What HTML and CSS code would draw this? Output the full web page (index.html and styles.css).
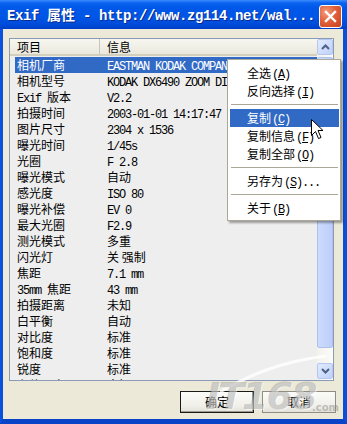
FILE: index.html
```html
<!DOCTYPE html>
<html lang="zh-CN">
<head>
<meta charset="utf-8">
<title>Exif 属性</title>
<link rel="stylesheet" href="styles.css">
</head>
<body>
<div class="window">
  <div class="titlebar">
    <div class="title"><span class="tm">Exif </span><span class="tc">属性</span><span class="tm"> - http://www.zg114.net/wal...</span></div>
    <div class="close">
      <svg width="13" height="13" viewBox="0 0 13 13"><path d="M2 2 L11 11 M11 2 L2 11" stroke="#fff" stroke-width="2.4" stroke-linecap="square"/></svg>
    </div>
  </div>
  <div class="frame">
    <div class="list">
      <div class="content">
        <div class="header">
          <div class="hcell h1">项目</div>
          <div class="hcell h2">信息</div>
        </div>
        <div class="rows">
          <div class="row sel"><div class="c1">相机厂商</div><div class="c2"><span class="m">EASTMAN KODAK COMPANY</span></div></div>
          <div class="row"><div class="c1">相机型号</div><div class="c2"><span class="m">KODAK DX6490 ZOOM DIGITAL CAMERA</span></div></div>
          <div class="row"><div class="c1"><span class="m">Exif </span>版本</div><div class="c2"><span class="m">V2.2</span></div></div>
          <div class="row"><div class="c1">拍摄时间</div><div class="c2"><span class="m">2003-01-01 14:17:47</span></div></div>
          <div class="row"><div class="c1">图片尺寸</div><div class="c2"><span class="m">2304 x 1536</span></div></div>
          <div class="row"><div class="c1">曝光时间</div><div class="c2"><span class="m">1/45s</span></div></div>
          <div class="row"><div class="c1">光圈</div><div class="c2"><span class="m">F 2.8</span></div></div>
          <div class="row"><div class="c1">曝光模式</div><div class="c2">自动</div></div>
          <div class="row"><div class="c1">感光度</div><div class="c2"><span class="m">ISO 80</span></div></div>
          <div class="row"><div class="c1">曝光补偿</div><div class="c2"><span class="m">EV 0</span></div></div>
          <div class="row"><div class="c1">最大光圈</div><div class="c2"><span class="m">F2.9</span></div></div>
          <div class="row"><div class="c1">测光模式</div><div class="c2">多重</div></div>
          <div class="row"><div class="c1">闪光灯</div><div class="c2">关 强制</div></div>
          <div class="row"><div class="c1">焦距</div><div class="c2"><span class="m">7.1 mm</span></div></div>
          <div class="row"><div class="c1"><span class="m">35mm </span>焦距</div><div class="c2"><span class="m">43 mm</span></div></div>
          <div class="row"><div class="c1">拍摄距离</div><div class="c2">未知</div></div>
          <div class="row"><div class="c1">白平衡</div><div class="c2">自动</div></div>
          <div class="row"><div class="c1">对比度</div><div class="c2">标准</div></div>
          <div class="row"><div class="c1">饱和度</div><div class="c2">标准</div></div>
          <div class="row"><div class="c1">锐度</div><div class="c2">标准</div></div>
          <div class="row"><div class="c1">主体距离</div><div class="c2">未知</div></div>
        </div>
      </div>
      <div class="scrollbar">
        <div class="sbtn">
          <svg width="9" height="6" viewBox="0 0 9 6"><path d="M1 5 L4.5 1.5 L8 5" fill="none" stroke="#4d6185" stroke-width="2"/></svg>
        </div>
        <div class="track"><div class="thumb"></div></div>
        <div class="sbtn">
          <svg width="9" height="6" viewBox="0 0 9 6"><path d="M1 1 L4.5 4.5 L8 1" fill="none" stroke="#4d6185" stroke-width="2"/></svg>
        </div>
      </div>
    </div>
    <div class="buttons">
      <div class="btn default">确定</div>
      <div class="btn">取消</div>
    </div>
  </div>

  <div class="menu">
    <div class="mi">全选<span class="m">(<u>A</u>)</span></div>
    <div class="mi">反向选择<span class="m">(<u>I</u>)</span></div>
    <div class="sep"></div>
    <div class="mi hl">复制<span class="m">(<u>C</u>)</span></div>
    <div class="mi">复制信息<span class="m">(<u>F</u>)</span></div>
    <div class="mi">复制全部<span class="m">(<u>O</u>)</span></div>
    <div class="sep"></div>
    <div class="mi">另存为<span class="m">(<u>S</u>)...</span></div>
    <div class="sep"></div>
    <div class="mi">关于<span class="m">(<u>B</u>)</span></div>
  </div>

  <svg class="cursor" width="13" height="21" viewBox="0 0 13 21">
    <path d="M0.5 0.5 L0.5 16.5 L4.5 12.5 L7.5 19.5 L10 18.5 L7 11.5 L12 11.5 Z" fill="#fff" stroke="#000" stroke-width="1"/>
  </svg>

  <div class="watermark">
    <svg class="swoosh" width="110" height="40" viewBox="0 0 110 40"><path d="M2 38 C30 22 60 8 108 2" fill="none" stroke="rgba(255,255,255,0.8)" stroke-width="3"/></svg>
    <span class="wm-big">IT168</span><span class="wm-com">.com</span>
  </div>
</div>
</body>
</html>
```

FILE: styles.css
```css
html, body {
  margin: 0;
  padding: 0;
}
body {
  width: 347px;
  height: 424px;
  overflow: hidden;
  background: #0054e3;
  font-family: "Noto Sans CJK SC", "Liberation Sans", sans-serif;
  font-size: 12px;
  color: #000;
}
.window {
  position: relative;
  width: 347px;
  height: 424px;
  display: flex;
  flex-direction: column;
}
.titlebar {
  height: 29px;
  flex: none;
  display: flex;
  align-items: center;
  justify-content: space-between;
  background: linear-gradient(#3d8cff 0px, #0a62f0 3px, #0058e8 8px, #0055e5 18px, #004ad8 25px, #003fc8 29px);
  padding: 0 5px 0 7px;
  box-sizing: border-box;
}
.title {
  color: #fff;
  font-weight: bold;
  white-space: nowrap;
  text-shadow: 1px 1px 0 #0b2a8a;
  line-height: 29px;
  padding-top: 1px;
}
.tm {
  font-family: "Liberation Mono", monospace;
  font-size: 14px;
  letter-spacing: -0.4px;
}
.tc {
  font-family: "Noto Sans CJK SC", sans-serif;
  font-size: 14px;
}
.close {
  width: 21px;
  height: 21px;
  border: 1px solid #fff;
  border-radius: 3px;
  background: radial-gradient(circle at 30% 30%, #f39c7e 0%, #e2603a 45%, #c8401a 100%);
  display: flex;
  align-items: center;
  justify-content: center;
  margin-top: 3px;
}
.frame {
  flex: 1;
  display: flex;
  flex-direction: column;
  background: #ece9d8;
  border-left: 3px solid #0a52de;
  border-right: 4px solid #0a4fd8;
  border-bottom: 5px solid #0843c8;
  padding: 9px 6px 0 6px;
}
.list {
  height: 343px;
  box-sizing: border-box;
  margin-right: 3px;
  border: 1px solid #8a9bb8;
  background: #eeeeee;
  display: flex;
  overflow: hidden;
}
.content {
  flex: 1;
  min-width: 0;
  overflow: hidden;
}
.header {
  height: 17px;
  box-sizing: border-box;
  display: flex;
  background: linear-gradient(#f7f6f0, #ebe9dd);
  border-bottom: 2px solid #d3cfbf;
}
.hcell {
  line-height: 15px;
  padding-left: 7px;
  box-sizing: border-box;
}
.h1 {
  width: 90px;
  border-right: 1px solid #c9c6b5;
}
.h2 {
  flex: 1;
}
.rows {
  padding: 1px 0 0 5px;
}
.row {
  display: flex;
  height: 16px;
  line-height: 16px;
  white-space: nowrap;
}
.row.sel {
  background: #316ac5;
  color: #fff;
}
.c1 {
  width: 85px;
  padding-left: 2px;
  box-sizing: border-box;
  flex: none;
}
.c2 {
  flex: 1;
  padding-left: 7px;
  overflow: hidden;
}
.m {
  font-family: "Liberation Mono", monospace;
  font-size: 12px;
  letter-spacing: -1.2px;
}
.scrollbar {
  width: 16px;
  flex: none;
  display: flex;
  flex-direction: column;
  background: linear-gradient(90deg, #f3f2ec, #fbfbf8);
  padding-bottom: 1px;
}
.sbtn {
  height: 16px;
  flex: none;
  box-sizing: border-box;
  border: 1px solid #b5c6ef;
  border-radius: 2px;
  background: linear-gradient(135deg, #e2ebfe, #bfd1fb);
  display: flex;
  align-items: center;
  justify-content: center;
}
.track {
  flex: 1;
  padding: 2px 0 15px 0;
  display: flex;
  flex-direction: column;
}
.thumb {
  flex: 1;
  border: 1px solid #aec0ec;
  border-radius: 2px;
  background: linear-gradient(90deg, #cddbfd, #bccefa);
}
.buttons {
  display: flex;
  justify-content: flex-end;
  gap: 8px;
  margin-top: 10px;
  padding-right: 1px;
}
.btn {
  width: 74px;
  height: 22px;
  box-sizing: border-box;
  border: 1px solid #8f8d86;
  background: linear-gradient(#fbfbf9, #f0efe9 70%, #e3e1d8);
  text-align: center;
  line-height: 20px;
}
.btn.default {
  border: 1px solid #1a1a1a;
  box-shadow: inset -1px -1px 0 #9d9a8e;
}
.menu {
  position: absolute;
  left: 227px;
  top: 59px;
  width: 114px;
  box-sizing: border-box;
  background: #fff;
  border: 1px solid #aca899;
  padding: 4px 1px 3px 2px;
  box-shadow: 2px 2px 2px rgba(0, 0, 0, 0.35);
}
.mi {
  height: 18px;
  line-height: 18px;
  padding-left: 17px;
  white-space: nowrap;
}
.mi.hl {
  background: #316ac5;
  color: #fff;
}
.mi .m {
  margin-left: 1px;
}
.sep {
  height: 9px;
  display: flex;
  align-items: center;
}
.sep::after {
  content: "";
  flex: 1;
  height: 1px;
  background: #aca899;
  margin: 0 1px;
}
.cursor {
  position: absolute;
  left: 311px;
  top: 119px;
}
.watermark {
  position: absolute;
  left: 200px;
  top: 352px;
  width: 140px;
  height: 68px;
  pointer-events: none;
}
.swoosh {
  position: absolute;
  left: 18px;
  top: 2px;
}
.wm-big {
  position: absolute;
  left: 6px;
  top: 22px;
  font-family: "DejaVu Sans", sans-serif;
  font-weight: bold;
  font-style: italic;
  font-size: 38px;
  line-height: 44px;
  letter-spacing: -2px;
  color: rgba(140, 140, 140, 0.4);
  text-shadow: 1px 1px 0 rgba(255, 255, 255, 0.5);
}
.wm-com {
  position: absolute;
  left: 112px;
  top: 50px;
  font-family: "DejaVu Sans", sans-serif;
  font-weight: bold;
  font-size: 10px;
  line-height: 12px;
  color: rgba(140, 140, 140, 0.5);
}
```
